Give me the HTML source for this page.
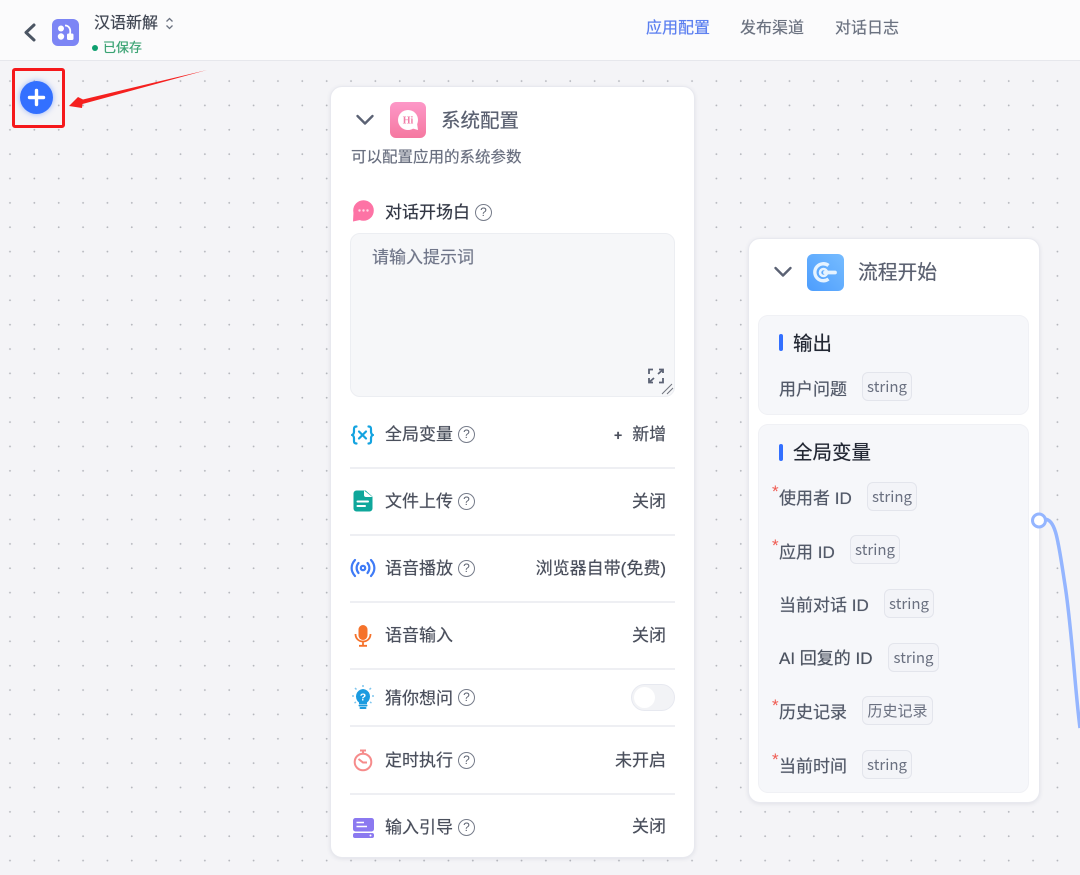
<!DOCTYPE html>
<html lang="zh">
<head>
<meta charset="utf-8">
<style>
html,body{margin:0;padding:0}
body{width:1080px;height:875px;overflow:hidden;position:relative;background-color:#f4f4f7;font-family:"Liberation Sans","Noto Sans CJK SC",sans-serif;color:#4b5563;
background-image:radial-gradient(circle at center,#b5b7bd 0,#b5b7bd .8px,transparent 1.1px);background-size:24.37px 24.37px;background-position:-2.2px -4.2px}
.t{position:absolute;white-space:nowrap;line-height:1;text-shadow:0 0 .5px currentColor}
.a{position:absolute}
#hdr{position:absolute;left:0;top:0;width:1080px;height:60px;background:#fbfbfc;border-bottom:1px solid #e6e7ec}
.card{position:absolute;background:#fff;border:1px solid #e8e9ef;border-radius:12px;box-shadow:0 1px 4px rgba(60,70,100,.1);box-sizing:border-box}
.line{position:absolute;left:350px;width:325px;height:2px;background:#eeeff3}
.lb{font-size:17px;color:#4a4f5c}
.rv{font-size:17px;color:#4a4f5c;text-align:right;width:200px;left:466px}
.q{position:absolute;width:17px;height:17px;border:1.5px solid #767c8a;border-radius:50%;box-sizing:border-box;font-size:12px;line-height:14px;text-align:center;color:#5f6573}
.panel{position:absolute;left:758px;width:271px;background:#f6f7fa;border:1px solid #f0f1f5;border-radius:10px;box-sizing:border-box}
.bar{position:absolute;left:779px;width:4px;height:17px;background:#3370ff;border-radius:2px}
.h{font-size:19.5px;color:#222733;left:793px}
.vl{font-size:17px;color:#535a69;left:779px}
.tag{position:absolute;height:29px;box-sizing:border-box;border:1.5px solid #e3e5ec;border-radius:6px;background:#f3f4f8;font-family:"Noto Sans CJK SC",sans-serif;font-size:15px;line-height:27px;text-align:center;color:#6a7080}
.star{position:absolute;left:772px;color:#ef5a50;font-size:17px;line-height:1}
</style>
</head>
<body>
<div id="hdr"></div>
<svg class="a" style="left:22px;top:21px" width="16" height="22" viewBox="0 0 16 22"><path d="M12 4 L4 11.5 L12 19" fill="none" stroke="#4b5563" stroke-width="3" stroke-linecap="round" stroke-linejoin="round"/></svg>
<svg class="a" style="left:52px;top:19px" width="27" height="27" viewBox="0 0 27 27"><rect width="27" height="27" rx="6" fill="#7c85f5"/><circle cx="9" cy="9.5" r="3" fill="#fff"/><circle cx="9" cy="17.5" r="3.2" fill="#fff"/><rect x="15" y="14.5" width="6.5" height="6.5" rx="1.5" fill="#fff"/><path d="M13 6.5 C17 6.5 19 10 18 15" fill="none" stroke="#fff" stroke-width="1.8"/></svg>
<div class="t" style="left:94px;top:16px;font-size:16px;color:#3f4552">汉语新解</div>
<svg class="a" style="left:164px;top:16px" width="11" height="15" viewBox="0 0 11 15"><path d="M2.5 5.5 L5.5 2.5 L8.5 5.5 M2.5 9.5 L5.5 12.5 L8.5 9.5" fill="none" stroke="#6b7280" stroke-width="1.3"/></svg>
<div class="a" style="left:92px;top:45px;width:6px;height:6px;border-radius:50%;background:#0d9f6e"></div>
<div class="t" style="left:103px;top:41px;font-size:13px;color:#3aa373">已保存</div>
<div class="t" style="left:646px;top:21px;font-size:16px;color:#5b7ff0">应用配置</div>
<div class="t" style="left:740px;top:21px;font-size:16px;color:#6b7280">发布渠道</div>
<div class="t" style="left:835px;top:21px;font-size:16px;color:#6b7280">对话日志</div>

<!-- plus button -->
<div class="a" style="left:20px;top:81px;width:33px;height:33px;border-radius:50%;background:#3370ff;box-shadow:0 0 6px rgba(51,112,255,.5)"></div>
<svg class="a" style="left:20px;top:81px" width="33" height="33" viewBox="0 0 33 33"><path d="M16.5 9.5 V23.5 M9.5 16.5 H23.5" stroke="#fff" stroke-width="3.4" stroke-linecap="round"/></svg>
<div class="a" style="left:12px;top:68px;width:53px;height:60px;box-sizing:border-box;border:3px solid #f5181b;border-radius:3px"></div>
<svg class="a" style="left:60px;top:60px" width="160" height="60" viewBox="0 0 160 60"><path d="M147 10 L23 39.5 L18 37 L9 46 L22 48 L22.5 44 Z" fill="#f5201f"/></svg>

<!-- system card -->
<div class="card" style="left:330px;top:86px;width:365px;height:772px"></div>
<svg class="a" style="left:355px;top:112px" width="20" height="16" viewBox="0 0 20 16"><path d="M2.5 4 L10 11.5 L17.5 4" fill="none" stroke="#5b6274" stroke-width="2.4" stroke-linecap="round" stroke-linejoin="round"/></svg>
<svg class="a" style="left:390px;top:102px" width="36" height="36" viewBox="0 0 36 36"><defs><linearGradient id="g1" x1="0" y1="0" x2="0" y2="1"><stop offset="0" stop-color="#fd98c8"/><stop offset="1" stop-color="#f578a0"/></linearGradient></defs><rect width="36" height="36" rx="6" fill="url(#g1)"/><circle cx="18" cy="18" r="10" fill="#fff"/><path d="M21 26 L28 28 L27 21Z" fill="#fff"/><text x="18" y="21.5" font-size="10" font-weight="bold" text-anchor="middle" fill="#f07fa8" font-family="Liberation Serif,serif">Hi</text></svg>
<div class="t" style="left:441px;top:112px;font-size:19.5px;color:#5a6070">系统配置</div>
<div class="t" style="left:351px;top:150px;font-size:15.5px;color:#6a7080">可以配置应用的系统参数</div>

<svg class="a" style="left:352px;top:200px" width="22" height="22" viewBox="0 0 22 22"><circle cx="11.5" cy="10.5" r="10.3" fill="#fd73a5"/><path d="M1.5 12 L1 21.5 L8 20Z" fill="#fd73a5"/><circle cx="7.5" cy="10.5" r="1.2" fill="#ffd9e6"/><circle cx="11.5" cy="10.5" r="1.2" fill="#ffd9e6"/><circle cx="15.5" cy="10.5" r="1.2" fill="#ffd9e6"/></svg>
<div class="t lb" style="left:385px;top:204px;color:#333845">对话开场白</div>
<div class="q" style="left:475px;top:204px">?</div>

<div class="a" style="left:350px;top:233px;width:325px;height:164px;background:#f6f7f9;border:1px solid #eceef2;border-radius:10px;box-sizing:border-box"></div>
<div class="t" style="left:372px;top:249px;font-size:17px;color:#71778a">请输入提示词</div>
<svg class="a" style="left:648px;top:368px" width="16" height="16" viewBox="0 0 16 16"><path d="M1 6 V1.5 H5 M11 1.5 H15 V5 M15 10 V14.5 H11 M5 14.5 H1 V10 M14 2.5 L10 6 M2 13.5 L6 10" fill="none" stroke="#5b6274" stroke-width="1.8"/></svg>
<svg class="a" style="left:660px;top:383px" width="14" height="12" viewBox="0 0 14 12"><path d="M2 11 L12 1 M7 11 L13 5" stroke="#70747e" stroke-width="1"/></svg>

<!-- rows -->
<svg class="a" style="left:351px;top:425px" width="23" height="20" viewBox="0 0 23 20"><g fill="none" stroke="#13a3e0" stroke-width="2.2" stroke-linecap="round" stroke-linejoin="round"><path d="M5.5 1.5 C2.5 1.5 3 3.5 3 6.5 C3 8.5 2.500 9.5 1 10 C2.5 10.5 3 11.5 3 13.5 C3 16.5 2.5 18.5 5.5 18.5"/><path d="M17.5 1.5 C20.5 1.5 20 3.5 20 6.5 C20 8.5 20.5 9.5 22 10 C20.5 10.5 20 11.5 20 13.500 C20 16.5 20.5 18.5 17.5 18.5"/><path d="M8 6.5 L15 13.5 M15 6.5 L8 13.5"/></g></svg>
<div class="t lb" style="left:385px;top:426px">全局变量</div><div class="q" style="left:458px;top:426px">?</div>
<div class="t" style="left:614px;top:426px;font-size:17px;color:#4a4f5c"><b style="font-size:14px;margin-right:10px">+</b>新增</div>
<div class="line" style="top:467px"></div>

<svg class="a" style="left:353px;top:490px" width="20" height="22" viewBox="0 0 20 22"><path d="M3.5 .5 H16.5 A3 3 0 0 1 19.5 3.5 V18.5 A3 3 0 0 1 16.5 21.5 H3.5 A3 3 0 0 1 .5 18.5 V3.5 A3 3 0 0 1 3.5 .5Z" fill="#0fa79b"/><path d="M11 .5 L19.5 7 L13 7 A2 2 0 0 1 11 5Z" fill="#fff"/><path d="M12 0 H20 V7Z" fill="#fff"/><path d="M4.5 11.5 H15 M4.5 16 H12" stroke="#fff" stroke-width="2" stroke-linecap="round"/></svg>
<div class="t lb" style="left:385px;top:493px">文件上传</div><div class="q" style="left:458px;top:493px">?</div>
<div class="t rv" style="top:493px">关闭</div>
<div class="line" style="top:534px"></div>

<svg class="a" style="left:350px;top:558px" width="26" height="20" viewBox="0 0 26 20"><g fill="none" stroke="#3f7bf6" stroke-width="2.2" stroke-linecap="round"><path d="M5 2 C.5 7 .5 13 5 18 M21 2 C25.5 7 25.5 13 21 18 M8.5 5 C6 8 6 12 8.5 15 M17.5 5 C20 8 20 12 17.5 15"/><circle cx="13" cy="10" r="2.2"/></g></svg>
<div class="t lb" style="left:385px;top:560px">语音播放</div><div class="q" style="left:458px;top:560px">?</div>
<div class="t rv" style="top:560px">浏览器自带(免费)</div>
<div class="line" style="top:601px"></div>

<svg class="a" style="left:354px;top:624px" width="18" height="23" viewBox="0 0 18 23"><rect x="4.5" y="1" width="9" height="15" rx="4.5" fill="#f5722b"/><path d="M1.5 10 C1.5 20 16.5 20 16.5 10 M9 18 V21.5 M5 21.8 H13" fill="none" stroke="#f5722b" stroke-width="1.8"/></svg>
<div class="t lb" style="left:385px;top:627px">语音输入</div>
<div class="t rv" style="top:627px">关闭</div>
<div class="line" style="top:668px"></div>

<svg class="a" style="left:352px;top:685px" width="22" height="26" viewBox="0 0 22 26"><path d="M11 4 A7.5 7.5 0 0 1 15 17.5 V19 H7 V17.5 A7.5 7.5 0 0 1 11 4Z" fill="#1b9be0"/><path d="M7.5 20.5 H14.5 M8.5 23 H13.5" stroke="#1b9be0" stroke-width="2" stroke-linecap="round"/><text x="11" y="15.5" font-size="10.5" font-weight="bold" text-anchor="middle" fill="#fff" font-family="Liberation Sans,sans-serif">?</text><g stroke="#7fc6ee" stroke-width="1.5"><path d="M11 0 V2 M3 3 L4.5 4.5 M19 3 L17.5 4.5 M0 11 H2 M20 11 H22 M2.5 18 L4 17 M19.5 18 L18 17"/></g></svg>
<div class="t lb" style="left:385px;top:690px">猜你想问</div><div class="q" style="left:458px;top:689px">?</div>
<div class="a" style="left:631px;top:684px;width:44px;height:27px;border-radius:14px;background:#f2f3f6;border:1px solid #e7e9f0;box-sizing:border-box"></div>
<div class="a" style="left:634px;top:687px;width:21px;height:21px;border-radius:50%;background:#fff"></div>
<div class="line" style="top:725px"></div>

<svg class="a" style="left:353px;top:749px" width="20" height="23" viewBox="0 0 20 23"><g fill="none" stroke="#f68b8b" stroke-width="2"><circle cx="10" cy="13" r="8.3"/><path d="M7 1.5 H13 M10 1.5 V4.5 M5.5 10 L10 13.5 L14 13.5"/></g></svg>
<div class="t lb" style="left:385px;top:752px">定时执行</div><div class="q" style="left:458px;top:752px">?</div>
<div class="t rv" style="top:752px">未开启</div>
<div class="line" style="top:793px"></div>

<svg class="a" style="left:353px;top:818px" width="21" height="20" viewBox="0 0 21 20"><rect width="21" height="13.5" rx="2.5" fill="#8b79f0"/><rect y="15" width="21" height="5" rx="2" fill="#8b79f0"/><path d="M3.5 4.5 H11 M3.5 8.5 H14" stroke="#fff" stroke-width="1.5"/><circle cx="17.5" cy="17.5" r="1" fill="#fff"/></svg>
<div class="t lb" style="left:385px;top:819px">输入引导</div><div class="q" style="left:458px;top:819px">?</div>
<div class="t rv" style="top:818px">关闭</div>

<!-- flow card -->
<div class="card" style="left:748px;top:238px;width:292px;height:565px"></div>
<svg class="a" style="left:773px;top:264px" width="20" height="16" viewBox="0 0 20 16"><path d="M2.5 4 L10 11.5 L17.5 4" fill="none" stroke="#5b6274" stroke-width="2.4" stroke-linecap="round" stroke-linejoin="round"/></svg>
<svg class="a" style="left:807px;top:254px" width="37" height="37" viewBox="0 0 37 37"><defs><linearGradient id="g2" x1="1" y1="0" x2="0" y2="1"><stop offset="0" stop-color="#76bcff"/><stop offset="1" stop-color="#4d9dfd"/></linearGradient></defs><rect width="37" height="37" rx="6" fill="url(#g2)"/><path d="M21.5 11.5 A8.5 8.5 0 1 0 21.5 25" fill="none" stroke="#e6f3ff" stroke-width="3.4"/><circle cx="16.5" cy="18.5" r="3.5" fill="none" stroke="#e6f3ff" stroke-width="2.6"/><path d="M18 18.5 H28" stroke="#e6f3ff" stroke-width="3.8" stroke-linecap="round"/></svg>
<div class="t" style="left:858px;top:264px;font-size:19.75px;color:#5a6070">流程开始</div>

<div class="panel" style="top:315px;height:100px"></div>
<div class="bar" style="top:334px"></div>
<div class="t a h" style="top:335px">输出</div>
<div class="t a vl" style="top:381px">用户问题</div>
<div class="tag" style="left:862px;top:372px;width:50px">string</div>

<div class="panel" style="top:424px;height:369px"></div>
<div class="bar" style="top:444px"></div>
<div class="t a h" style="top:444px">全局变量</div>

<div class="star" style="top:483px">*</div>
<div class="t a vl" style="top:490px">使用者 ID</div>
<div class="tag" style="left:867px;top:482px;width:50px">string</div>

<div class="star" style="top:537px">*</div>
<div class="t a vl" style="top:544px">应用 ID</div>
<div class="tag" style="left:850px;top:535px;width:50px">string</div>

<div class="t a vl" style="top:597px">当前对话 ID</div>
<div class="tag" style="left:884px;top:589px;width:50px">string</div>

<div class="t a vl" style="top:650px;color:#4c5360">AI 回复的 ID</div>
<div class="tag" style="left:888px;top:643px;width:51px">string</div>

<div class="star" style="top:697px">*</div>
<div class="t a vl" style="top:704px">历史记录</div>
<div class="tag" style="left:862px;top:696px;width:71px">历史记录</div>

<div class="star" style="top:751px">*</div>
<div class="t a vl" style="top:758px">当前时间</div>
<div class="tag" style="left:862px;top:750px;width:50px">string</div>

<!-- connector -->
<svg class="a" style="left:1020px;top:505px" width="60" height="230" viewBox="0 0 60 230"><path d="M24 14 C36 14 38 35 45 80 S55 185 60 223" fill="none" stroke="#94b5ff" stroke-width="3.5"/><circle cx="19" cy="15.5" r="6.5" fill="#fff" stroke="#94b5ff" stroke-width="3"/></svg>
</body>
</html>
